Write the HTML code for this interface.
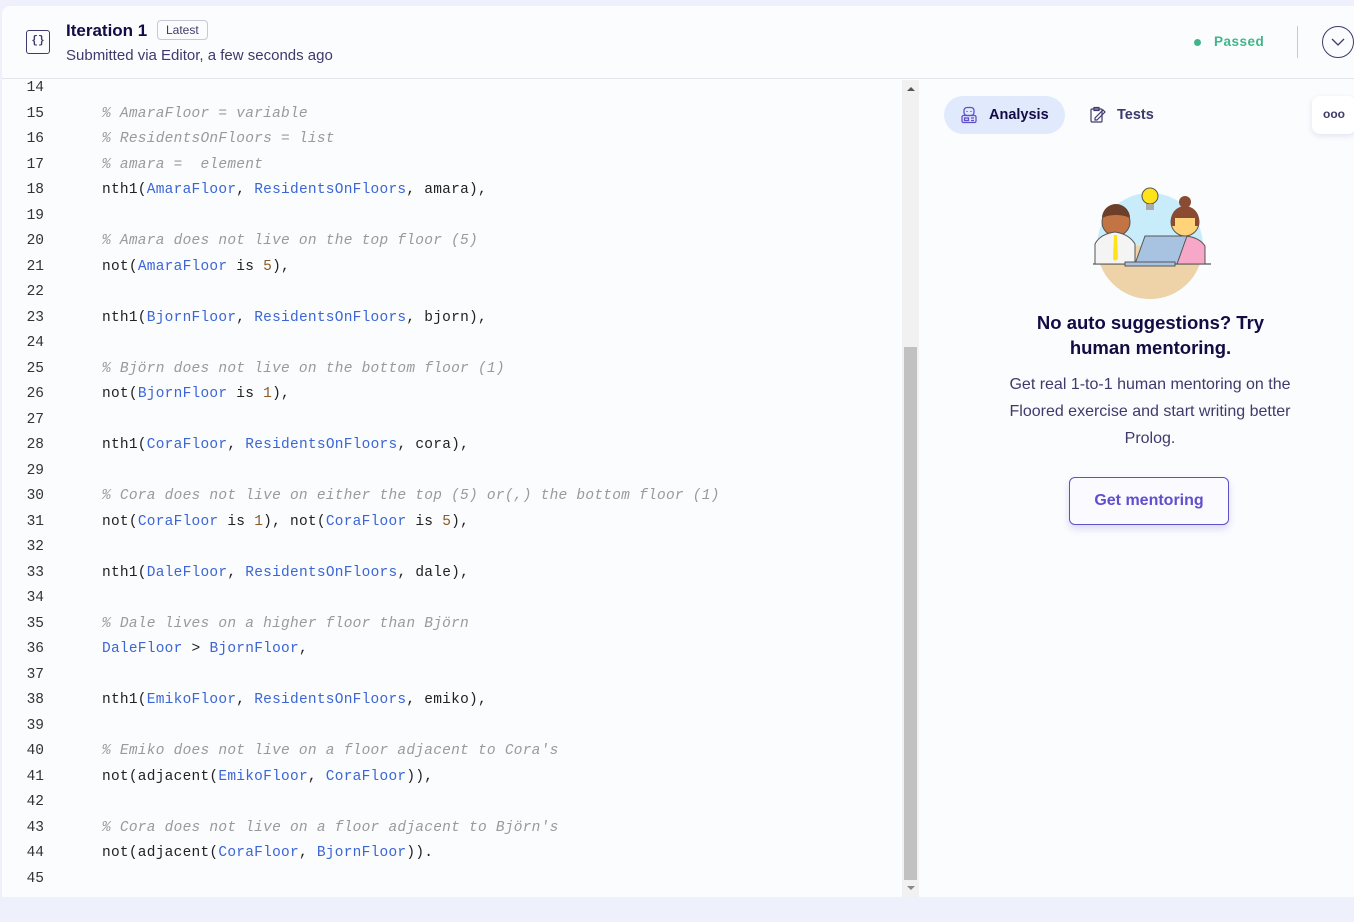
<!DOCTYPE html>
<html><head><meta charset="utf-8"><style>
*{margin:0;padding:0;box-sizing:border-box}
body{width:1354px;height:922px;background:#eef1fb;font-family:"Liberation Sans",sans-serif;position:relative;overflow:hidden}
.card{position:absolute;left:2px;top:6px;width:1352px;height:891px;background:#fbfcfe;border-radius:8px 0 0 0}
.hdr{position:absolute;left:0;top:0;width:1352px;height:73px;border-bottom:1px solid #e2e4ec}
.ico{position:absolute;left:24px;top:24px;width:24px;height:24px;border:1.5px solid #3d3b6b;border-radius:3px;font:bold 11px "Liberation Mono",monospace;color:#3d3b6b;text-align:center;line-height:21px}
.title{position:absolute;left:64px;top:15px;font-size:17px;font-weight:bold;color:#130b43}
.badge{position:absolute;left:155px;top:14px;border:1px solid #c8c8d4;border-radius:4px;font-size:12px;color:#3d3b6b;padding:2px 8px}
.sub{position:absolute;left:64px;top:41px;font-size:15px;color:#3d3b6b}
.pass{position:absolute;left:1212px;top:28px;font-size:13.5px;font-weight:bold;color:#3fb689;letter-spacing:.5px}
.dot{position:absolute;left:1192px;top:33px;width:7px;height:7px;border-radius:50%;background:#3fb689}
.vl{position:absolute;left:1295px;top:20px;width:1px;height:32px;background:#c8c8d4}
.circ{position:absolute;left:1320px;top:20px;width:32px;height:32px;border:1.3px solid #3d3b6b;border-radius:50%}
.code{position:absolute;left:0;top:74px;width:900px;height:817px;font:14.5px "Liberation Mono",monospace;letter-spacing:.25px;color:#222}
.ln{position:absolute;left:0;width:42px;text-align:right;color:#333;letter-spacing:0}
.cl{position:absolute;left:100px;white-space:pre}
.c{color:#9a9a9a;font-style:italic}.v{color:#3c66d6}.n{color:#8a5a2b}
.sb{position:absolute;left:900px;top:74px;width:17px;height:817px;background:#f1f1f1}
.th{position:absolute;left:2px;top:267px;width:13px;height:533px;background:#c1c1c1}
.rp{position:absolute;left:917px;top:74px;width:435px;height:817px}
.tab1{position:absolute;left:25px;top:16px;width:121px;height:38px;border-radius:19px;background:#e1e9fd}
.tabt{position:absolute;top:27px;font-size:14.5px;font-weight:bold;color:#130b43}
.more{position:absolute;left:393px;top:16px;width:44px;height:38px;background:#fff;border-radius:8px;box-shadow:0 2px 6px rgba(80,80,160,.15);font-size:12px;color:#3d3b6b;text-align:center;line-height:36px;font-weight:bold}
h2{position:absolute;left:0;width:463px;text-align:center;top:230px;font-size:18.5px;line-height:25px;color:#130b43}
.p{position:absolute;left:68px;width:326px;text-align:center;top:291px;font-size:16px;line-height:27px;color:#3d3b6b}
.btn{position:absolute;left:150px;top:397px;width:160px;height:48px;border:1.5px solid #604fcd;border-radius:6px;background:#fbfaff;color:#604fcd;font-size:16px;font-weight:bold;text-align:center;line-height:45px;box-shadow:0 4px 8px rgba(96,79,205,.2)}
</style></head><body>
<div class="card">
<div class="hdr">
<div class="ico">{}</div>
<div class="title">Iteration 1</div><div class="badge">Latest</div>
<div class="sub">Submitted via Editor, a few seconds ago</div>
<div class="dot"></div><div class="pass">Passed</div><div class="vl"></div>
<div class="circ"><svg width="30" height="30" viewBox="0 0 30 30"><path d="M9 12l6 6 6-6" fill="none" stroke="#3d3b6b" stroke-width="1.3"/></svg></div>
</div>
<div class="code" id="code"></div>
<div class="sb"><div style="position:absolute;left:5px;top:7px;border:4px solid transparent;border-bottom:4px solid #555;border-top:0;width:0"></div><div class="th"></div><div style="position:absolute;left:5px;top:806px;border:4px solid transparent;border-top:4px solid #888;border-bottom:0;width:0"></div></div>
<div class="rp">
<div class="tab1"></div>
<svg style="position:absolute;left:41px;top:26px" width="18" height="18" viewBox="0 0 18 18" fill="none" stroke="#604fcd" stroke-width="1.3"><rect x="4" y="1.5" width="10" height="8" rx="3"/><rect x="2" y="9.5" width="14" height="7" rx="1.5"/><rect x="4.5" y="12" width="4" height="2.5"/><path d="M11 12h3M11 14.5h3M7 5v1M11 5v1"/></svg>
<div class="tabt" style="left:70px">Analysis</div>
<svg style="position:absolute;left:170px;top:26px" width="18" height="18" viewBox="0 0 18 18" fill="none" stroke="#3d3b6b" stroke-width="1.2"><rect x="2" y="3" width="11" height="13" rx="1"/><rect x="5" y="1.5" width="5" height="3"/><path d="M8 14l8-8-2-2-8 8v2z"/></svg>
<div class="tabt" style="left:198px;color:#3d3b6b">Tests</div>
<div class="more">ooo</div>
<svg style="position:absolute;left:170px;top:98px" width="122" height="122" viewBox="0 0 122 122">
<circle cx="61" cy="68" r="53" fill="#c9ecfb"/>
<path d="M8 68a53 53 0 0 0 106 0z" fill="#eed3a8"/>
<path d="M4 86h118" stroke="#555" stroke-width="1.2"/>
<circle cx="61" cy="18" r="8" fill="#ffe21a" stroke="#555"/><rect x="57" y="26" width="8" height="6" fill="#aaa"/>
<circle cx="27" cy="44" r="14" fill="#c27445" stroke="#555"/><path d="M13 40a14 14 0 0 1 28 0c-8-4-20-4-28 0z" fill="#6b3f2a"/>
<path d="M6 86v-20q5-10 20-12q14 2 20 12v20z" fill="#f4f4f4" stroke="#555"/><path d="M25 57l3 0 1 24-3 2-2-2z" fill="#ffe21a"/>
<circle cx="96" cy="44" r="14" fill="#ffd37a" stroke="#555"/><path d="M82 42a14 14 0 0 1 28 0v6h-4v-8h-20v8h-4z" fill="#8a4b32"/><circle cx="96" cy="24" r="6" fill="#8a4b32"/>
<path d="M76 86v-18q5-9 20-10q14 1 20 10v18z" fill="#f7a8c9" stroke="#555"/>
<path d="M46 86l10-28h42l-10 28z" fill="#a8c3e2" stroke="#555"/><rect x="36" y="84" width="50" height="4" fill="#a8c3e2" stroke="#555"/>
</svg>
<h2>No auto suggestions? Try<br>human mentoring.</h2>
<div class="p">Get real 1-to-1 human mentoring on the Floored exercise and start writing better Prolog.</div>
<div class="btn">Get mentoring</div>
</div>
</div>
<script>
var L={15:'<span class="c">% AmaraFloor = variable</span>',16:'<span class="c">% ResidentsOnFloors = list</span>',17:'<span class="c">% amara =  element</span>',
18:'nth1(<span class="v">AmaraFloor</span>, <span class="v">ResidentsOnFloors</span>, amara),',
20:'<span class="c">% Amara does not live on the top floor (5)</span>',21:'not(<span class="v">AmaraFloor</span> is <span class="n">5</span>),',
23:'nth1(<span class="v">BjornFloor</span>, <span class="v">ResidentsOnFloors</span>, bjorn),',
25:'<span class="c">% Björn does not live on the bottom floor (1)</span>',26:'not(<span class="v">BjornFloor</span> is <span class="n">1</span>),',
28:'nth1(<span class="v">CoraFloor</span>, <span class="v">ResidentsOnFloors</span>, cora),',
30:'<span class="c">% Cora does not live on either the top (5) or(,) the bottom floor (1)</span>',
31:'not(<span class="v">CoraFloor</span> is <span class="n">1</span>), not(<span class="v">CoraFloor</span> is <span class="n">5</span>),',
33:'nth1(<span class="v">DaleFloor</span>, <span class="v">ResidentsOnFloors</span>, dale),',
35:'<span class="c">% Dale lives on a higher floor than Björn</span>',36:'<span class="v">DaleFloor</span> &gt; <span class="v">BjornFloor</span>,',
38:'nth1(<span class="v">EmikoFloor</span>, <span class="v">ResidentsOnFloors</span>, emiko),',
40:'<span class="c">% Emiko does not live on a floor adjacent to Cora\'s</span>',41:'not(adjacent(<span class="v">EmikoFloor</span>, <span class="v">CoraFloor</span>)),',
43:'<span class="c">% Cora does not live on a floor adjacent to Björn\'s</span>',44:'not(adjacent(<span class="v">CoraFloor</span>, <span class="v">BjornFloor</span>)).'};
var h='';for(var i=14;i<=45;i++){var t=0+(i-14)*25.5;h+='<div class="ln" style="top:'+t+'px">'+i+'</div>';if(L[i])h+='<div class="cl" style="top:'+t+'px">'+L[i]+'</div>';}
document.getElementById('code').innerHTML=h;
</script>
</body></html>
